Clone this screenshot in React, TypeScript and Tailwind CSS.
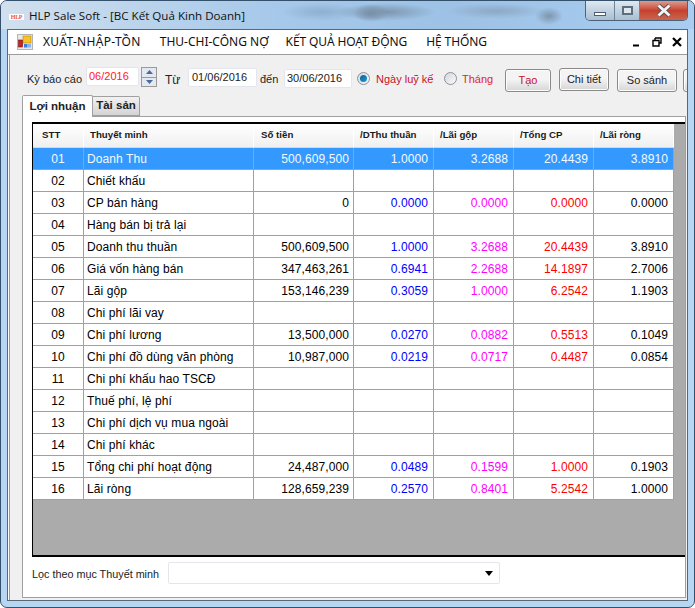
const rows: [string, string, string, string, string, string, string][] = [
  ["01", "Doanh Thu", "500,609,500", "1.0000", "3.2688", "20.4439", "3.8910"],
  ["02", "Chiết khấu", "", "", "", "", ""],
  ["03", "CP bán hàng", "0", "0.0000", "0.0000", "0.0000", "0.0000"],
  ["04", "Hàng bán bị trả lại", "", "", "", "", ""],
  ["05", "Doanh thu thuần", "500,609,500", "1.0000", "3.2688", "20.4439", "3.8910"],
  ["06", "Giá vốn hàng bán", "347,463,261", "0.6941", "2.2688", "14.1897", "2.7006"],
  ["07", "Lãi gộp", "153,146,239", "0.3059", "1.0000", "6.2542", "1.1903"],
  ["08", "Chi phí lãi vay", "", "", "", "", ""],
  ["09", "Chi phí lương", "13,500,000", "0.0270", "0.0882", "0.5513", "0.1049"],
  ["10", "Chi phí đồ dùng văn phòng", "10,987,000", "0.0219", "0.0717", "0.4487", "0.0854"],
  ["11", "Chi phí khấu hao TSCĐ", "", "", "", "", ""],
  ["12", "Thuế phí, lệ phí", "", "", "", "", ""],
  ["13", "Chi phí dịch vụ mua ngoài", "", "", "", "", ""],
  ["14", "Chi phí khác", "", "", "", "", ""],
  ["15", "Tổng chi phí hoạt động", "24,487,000", "0.0489", "0.1599", "1.0000", "0.1903"],
  ["16", "Lãi ròng", "128,659,239", "0.2570", "0.8401", "5.2542", "1.0000"],
];

const headers: [string, string][] = [
  ["STT", "w-[51px] pl-[9px]"],
  ["Thuyết minh", "w-[170px] pl-[6px]"],
  ["Số tiền", "w-[100px] pl-[7px]"],
  ["/DThu thuần", "w-[80px] pl-[6px]"],
  ["/Lãi gộp", "w-[80px] pl-[6px]"],
  ["/Tổng CP", "w-[80px] pl-[6px]"],
  ["/Lãi ròng", "w-[80px] pl-[6px]"],
];

function Row({ r, sel }: { r: (typeof rows)[number]; sel: boolean }) {
  const cell = "h-[22px] shrink-0 border-r border-b border-[#a0a0a0] flex items-center";
  const num = `${cell} w-[80px] justify-end pr-[5px]`;
  return (
    <div className={`flex w-[641px] text-[12px] tracking-[0.1px] ${sel ? "bg-[#3399ff] text-[#f4f9ff]" : "bg-white text-black"}`}>
      <div className={`${cell} w-[51px] justify-center`}>{r[0]}</div>
      <div className={`${cell} w-[170px] pl-[3px]`}>{r[1]}</div>
      <div className={`${cell} w-[100px] justify-end pr-[4px]`}>{r[2]}</div>
      <div className={`${num} ${sel ? "" : "text-[#0000ff]"}`}>{r[3]}</div>
      <div className={`${num} ${sel ? "" : "text-[#ff00ff]"}`}>{r[4]}</div>
      <div className={`${num} ${sel ? "" : "text-[#ff0000]"}`}>{r[5]}</div>
      <div className={`${num}`}>{r[6]}</div>
    </div>
  );
}

function Field({ value, className }: { value: string; className: string }) {
  return (
    <div className={`h-[19px] shrink-0 bg-white border border-[#e3e6ec] rounded-[2px] flex items-center text-[11px] ${className}`}>
      {value}
    </div>
  );
}

function Radio({ on }: { on: boolean }) {
  return (
    <div className="w-[13px] h-[13px] shrink-0 rounded-full border border-[#8c929c] bg-gradient-to-br from-[#d4d6da] to-[#fafafa] flex items-center justify-center">
      {on && <div className="w-[7px] h-[7px] rounded-full bg-gradient-to-br from-[#0f5f95] to-[#1c9bd8]" />}
    </div>
  );
}

function Btn({ label, className }: { label: string; className: string }) {
  return (
    <div className={`h-[23px] shrink-0 border border-[#8a8a8a] rounded-[3px] bg-gradient-to-b from-[#f4f4f4] from-45% to-[#d6d6d6] shadow-[inset_0_0_0_1px_#fcfcfc] flex items-center justify-center text-[11px] ${className}`}>
      {label}
    </div>
  );
}

export default function App() {
  return (
    <div
      className="w-[695px] h-[608px] overflow-hidden flex flex-col rounded-[7px] bg-[#b6d6f4] border border-[#35506a] text-black"
      style={{ fontFamily: '"Liberation Sans", Arial, sans-serif' }}
    >
      {/* title bar */}
      <div className="h-[28px] shrink-0 flex items-start bg-[radial-gradient(ellipse_50px_9px_at_385px_11px,#7c95ad,transparent),radial-gradient(ellipse_18px_9px_at_370px_12px,#71879c,transparent),radial-gradient(ellipse_50px_8px_at_495px_10px,#8ca8c4,transparent),radial-gradient(ellipse_14px_9px_at_548px_15px,#7d95ac,transparent),radial-gradient(ellipse_40px_9px_at_320px_11px,#8fb0cf,transparent),linear-gradient(to_right,#d2e0ee_0,#bdd5ec_18%,#a6c8ea_40%,#9dc2e6_65%,#a9cdf0_100%)]">
        <div className="ml-[8px] mt-[13px] w-[15px] h-[6px] bg-white flex items-center justify-center font-['Liberation_Serif'] font-bold text-[6px] leading-none text-[#ef5a1c] tracking-tighter">
          HLP
        </div>
        <div className="ml-[5px] mt-[7px] text-[11.6px] leading-[16px] font-['Open_Sans'] text-[#101010] whitespace-nowrap">
          HLP Sale Soft - [BC Kết Quả Kinh Doanh]
        </div>
        <div className="ml-auto mr-[6px] flex h-[20px] border border-t-0 border-[#4d6478] rounded-b-[5px] overflow-hidden">
          <div className="w-[29px] flex items-end justify-center pb-[4px] bg-gradient-to-b from-[#dfe8f0] via-[#c3d3e1] to-[#a9bfd2] border-r border-[#6f8599]">
            <div className="w-[12px] h-[4px] bg-white border border-[#4d5e6e]" />
          </div>
          <div className="w-[25px] flex items-center justify-center bg-gradient-to-b from-[#dfe8f0] via-[#c3d3e1] to-[#a9bfd2] border-r border-[#6f8599]">
            <div className="w-[11px] h-[9px] bg-[#dfe7ee] border-2 border-[#5b6f80]" />
          </div>
          <div className="w-[47px] flex items-center justify-center bg-gradient-to-b from-[#dc9a90] via-[#c5412e] to-[#c9654f]">
            <svg width="16" height="13" viewBox="0 0 16 13">
              <path d="M2.5 1.5 L13.5 11.5 M13.5 1.5 L2.5 11.5" stroke="#4d4d4d" strokeWidth="4.5" />
              <path d="M2.5 1.5 L13.5 11.5 M13.5 1.5 L2.5 11.5" stroke="#f2f2f2" strokeWidth="3" />
            </svg>
          </div>
        </div>
      </div>

      {/* client */}
      <div className="flex-1 min-h-0 mx-[6px] mb-[6px] flex flex-col border border-[#56687a] bg-white">
        {/* menu bar */}
        <div className="h-[25px] shrink-0 flex items-center bg-white border-b border-[#9c9c9c] font-['Noto_Sans'] text-[12px] text-[#111]">
          <svg className="ml-[9px]" width="16" height="16" viewBox="0 0 16 16">
            <rect x="0.5" y="0.5" width="15" height="15" fill="#e8e8e8" stroke="#b4b4b4" />
            <rect x="6" y="2" width="8" height="7" fill="#f7c325" stroke="#b68a10" strokeWidth="0.6" />
            <rect x="1.5" y="6" width="4" height="7" fill="#c8231c" stroke="#7d120e" strokeWidth="0.6" />
            <rect x="7" y="10" width="3.5" height="3.5" fill="#3d7de0" />
            <rect x="10.5" y="10" width="3.5" height="3.5" fill="#8cb4ee" />
          </svg>
          <span className="ml-[10px] whitespace-nowrap tracking-[0.3px]">XUẤT-NHẬP-TỒN</span>
          <span className="ml-[19px] whitespace-nowrap">THU-CHI-CÔNG NỢ</span>
          <span className="ml-[17px] whitespace-nowrap tracking-[-0.1px]">KẾT QUẢ HOẠT ĐỘNG</span>
          <span className="ml-[19px] whitespace-nowrap tracking-[-0.1px]">HỆ THỐNG</span>
          <div className="ml-auto mr-[5px] flex items-center gap-[10px]">
            <svg width="10" height="10" viewBox="0 0 10 10"><rect x="1" y="7.5" width="6" height="2" fill="#000" /></svg>
            <svg width="10" height="10" viewBox="0 0 10 10">
              <path d="M3 1h6v5H7M3 1v2M1 3.5h6V9H1z" fill="none" stroke="#000" strokeWidth="1.4" />
            </svg>
            <svg width="10" height="10" viewBox="0 0 10 10"><path d="M1 1l8 8M9 1l-8 8" stroke="#000" strokeWidth="2.2" /></svg>
          </div>
        </div>

        {/* form */}
        <div className="flex-1 min-h-0 ml-[1px] flex flex-col border-l border-[#9c9c9c] bg-[#f0f0f0] pb-[2px] overflow-hidden">
          {/* toolbar */}
          <div className="h-[39px] shrink-0 flex items-start pl-[17px] pt-[12px] text-[11px] text-[#222]">
            <span className="mt-[4px] w-[59px] shrink-0 whitespace-nowrap">Kỳ báo cáo</span>
            <Field value="06/2016" className="w-[53px] pl-[2px] text-[#ff1a1a]" />
            <div className="ml-[2px] w-[16px] h-[20px] shrink-0 flex flex-col border border-[#9a9a9a] bg-[#e4e8f0]">
              <div className="flex-1 flex items-center justify-center border-b border-[#9a9a9a]">
                <svg width="7" height="4" viewBox="0 0 7 4"><path d="M3.5 0L7 4H0z" fill="#4a6a9a" /></svg>
              </div>
              <div className="flex-1 flex items-center justify-center">
                <svg width="7" height="4" viewBox="0 0 7 4"><path d="M0 0h7L3.5 4z" fill="#4a6a9a" /></svg>
              </div>
            </div>
            <span className="ml-[8px] mt-[4px] w-[23px] shrink-0 text-[12px]">Từ</span>
            <Field value="01/06/2016" className="w-[69px] pl-[3px] mt-[1px]" />
            <span className="ml-[3px] mt-[4px] w-[24px] shrink-0 text-[11px]">đến</span>
            <Field value="30/06/2016" className="w-[68px] pl-[2px] mt-[2px]" />
            <div className="ml-[5px] mt-[5px]"><Radio on /></div>
            <span className="ml-[6px] mt-[4px] w-[62px] shrink-0 text-[#c8102e] whitespace-nowrap">Ngày luỹ kế</span>
            <div className="ml-[6px] mt-[5px]"><Radio on={false} /></div>
            <span className="ml-[5px] mt-[4px] w-[43px] shrink-0 text-[#e0281c]">Tháng</span>
            <Btn label="Tạo" className="w-[46px] mt-[2px] text-[#c8102e]" />
            <Btn label="Chi tiết" className="ml-[8px] w-[50px] mt-[1px]" />
            <Btn label="So sánh" className="ml-[8px] w-[60px] mt-[2px]" />
            <Btn label="" className="ml-[6px] w-[30px] mt-[2px]" />
          </div>

          {/* tabs */}
          <div className="h-[22px] shrink-0 flex items-end pl-[12px] text-[11.5px] font-bold text-[#222]">
            <div className="relative z-10 w-[71px] h-[22px] -mb-px bg-white border border-b-0 border-[#a0a0a0] rounded-t-[2px] flex items-center justify-center">
              Lợi nhuận
            </div>
            <div className="w-[47px] h-[20px] bg-gradient-to-b from-[#f2f2f2] to-[#d4d4d4] border border-l-0 border-[#a0a0a0] rounded-tr-[2px] flex items-center justify-center">
              Tài sản
            </div>
          </div>

          {/* tab page */}
          <div className="flex-1 min-h-0 ml-[12px] mr-[1px] flex flex-col bg-white border border-[#a0a0a0] pl-[9px] pt-[5px]">
            {/* grid */}
            <div className="h-[435px] shrink-0 flex flex-col border-t-2 border-l border-b-2 border-black bg-[#ababab] overflow-hidden">
              <div className="h-[24px] shrink-0 flex w-[641px] bg-gradient-to-b from-white to-[#f0f0f0] border-b border-[#d8d8d8] text-[9.7px] font-bold text-[#1a1a1a]">
                {headers.map(([t, c]) => (
                  <div key={t} className={`${c} shrink-0 flex items-center border-r border-white whitespace-nowrap`}>{t}</div>
                ))}
              </div>
              {rows.map((r, i) => (
                <Row key={r[0]} r={r} sel={i === 0} />
              ))}
            </div>
            {/* filter */}
            <div className="h-[40px] flex items-start pt-[5px] text-[10.8px] text-[#222]">
              <span className="mt-[4px] w-[136px] shrink-0 whitespace-nowrap">Lọc theo mục Thuyết minh</span>
              <div className="w-[332px] h-[22px] bg-white border border-[#e3e6ec] rounded-[2px] flex items-center justify-end pr-[6px]">
                <svg width="8" height="5" viewBox="0 0 8 5"><path d="M0 0h8L4 5z" fill="#000" /></svg>
              </div>
            </div>
          </div>
        </div>
      </div>
    </div>
  );
}
